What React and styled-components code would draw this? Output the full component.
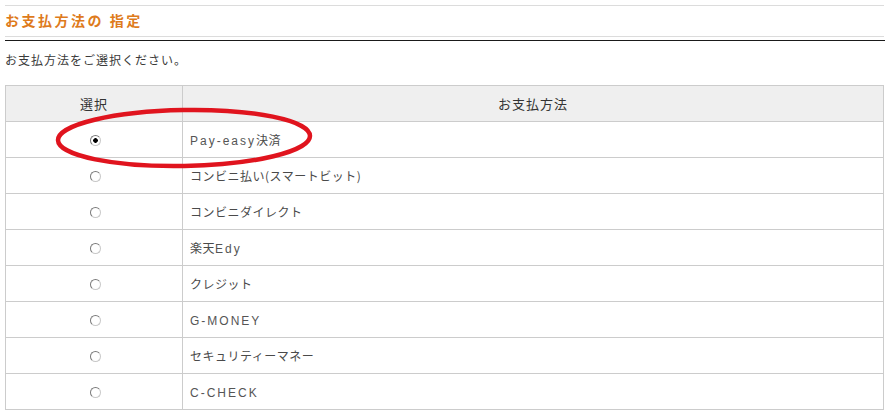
import React from "react";
import styled, { createGlobalStyle } from "styled-components";

const Global = createGlobalStyle`
  html, body { margin: 0; padding: 0; background: #fff; }
  body { font-family: "Noto Sans CJK JP", "Noto Sans", sans-serif; color: #333; }
`;

const Page = styled.div`
  position: relative;
  padding: 5px 5px 0 5px;
  width: 879px;
`;

const TitleBar = styled.div`
  border-top: 1px solid #dcdcdc;
  border-bottom: 1px solid #dcdcdc;
  height: 30px;
  display: flex;
  align-items: center;
`;

const Title = styled.h2`
  margin: 0;
  font-size: 14px;
  font-weight: bold;
  color: #de7b1c;
  letter-spacing: 2.5px;
  line-height: 1;
  position: relative;
  top: -1px;
`;

const Rule = styled.div`
  margin-top: 3px;
  height: 1px;
  background: #1a1a1a;
  margin-right: -1px;
`;

const Lead = styled.p`
  margin: 0;
  box-sizing: border-box;
  height: 44px;
  padding-top: 10px;
  line-height: 18px;
  font-size: 12px;
  letter-spacing: 1px;
  color: #3a3a3a;
`;

const TableWrap = styled.div`
  position: relative;
`;

const Table = styled.table`
  width: 100%;
  border-collapse: collapse;
  table-layout: fixed;
`;

const Th = styled.th`
  height: 35px;
  padding: 0;
  background: #efefef;
  border: 1px solid #cccccc;
  font-size: 13px;
  font-weight: normal;
  letter-spacing: 1px;
  color: #333;
  text-align: center;
  width: ${(p) => p.$w || "auto"};
`;

const Td = styled.td`
  height: 35px;
  padding: 0 0 0 ${(p) => (p.$center ? "0" : "7px")};
  border: 1px solid #cccccc;
  font-size: 12px;
  letter-spacing: 0.5px;
  color: #4a4a4a;
  text-align: ${(p) => (p.$center ? "center" : "left")};
  vertical-align: middle;
`;

const Latin = styled.span`
  letter-spacing: 2px;
  font-family: "Liberation Sans", Arial, sans-serif;
  color: #555;
`;

const Radio = styled.input`
  appearance: none;
  -webkit-appearance: none;
  box-sizing: border-box;
  margin: 0;
  width: 11px;
  height: 11px;
  border-radius: 50%;
  border: 1.5px solid #7a7a7a;
  border-right-color: #c8c8c8;
  border-bottom-color: #c8c8c8;
  background: #fff;
  display: inline-block;
  vertical-align: middle;
  position: relative;
  top: -1px;
  left: 1px;
  &:checked {
    background: radial-gradient(circle, #000 0, #000 2px, #fff 2.6px);
  }
`;

const Ellipse = styled.svg`
  position: absolute;
  left: 45px;
  top: 18px;
  pointer-events: none;
`;

const methods = [
  [["j", "Pay-easy"], ["jp", "決済"]],
  [["jp", "コンビニ払い(スマートビット)"]],
  [["jp", "コンビニダイレクト"]],
  [["jp", "楽天"], ["j", "Edy"]],
  [["jp", "クレジット"]],
  [["j", "G-MONEY"]],
  [["jp", "セキュリティーマネー"]],
  [["j", "C-CHECK"]],
];

export default function App() {
  return (
    <Page>
      <Global />
      <TitleBar>
        <Title>お支払方法の 指定</Title>
      </TitleBar>
      <Rule />
      <Lead>お支払方法をご選択ください。</Lead>
      <TableWrap>
        <Table>
          <thead>
            <tr>
              <Th $w="176px">選択</Th>
              <Th>お支払方法</Th>
            </tr>
          </thead>
          <tbody>
            {methods.map((parts, i) => (
              <tr key={i}>
                <Td $center>
                  <Radio type="radio" name="pay" defaultChecked={i === 0} />
                </Td>
                <Td>
                  {parts.map(([k, t], j) =>
                    k === "j" ? <Latin key={j}>{t}</Latin> : <span key={j}>{t}</span>
                  )}
                </Td>
              </tr>
            ))}
          </tbody>
        </Table>
        <Ellipse width="275" height="72" viewBox="0 0 275 72">
          <ellipse
            cx="134"
            cy="35"
            rx="126"
            ry="28"
            fill="none"
            stroke="#e0141e"
            strokeWidth="4.5"
            transform="rotate(-1 134 35)"
          />
        </Ellipse>
      </TableWrap>
    </Page>
  );
}
